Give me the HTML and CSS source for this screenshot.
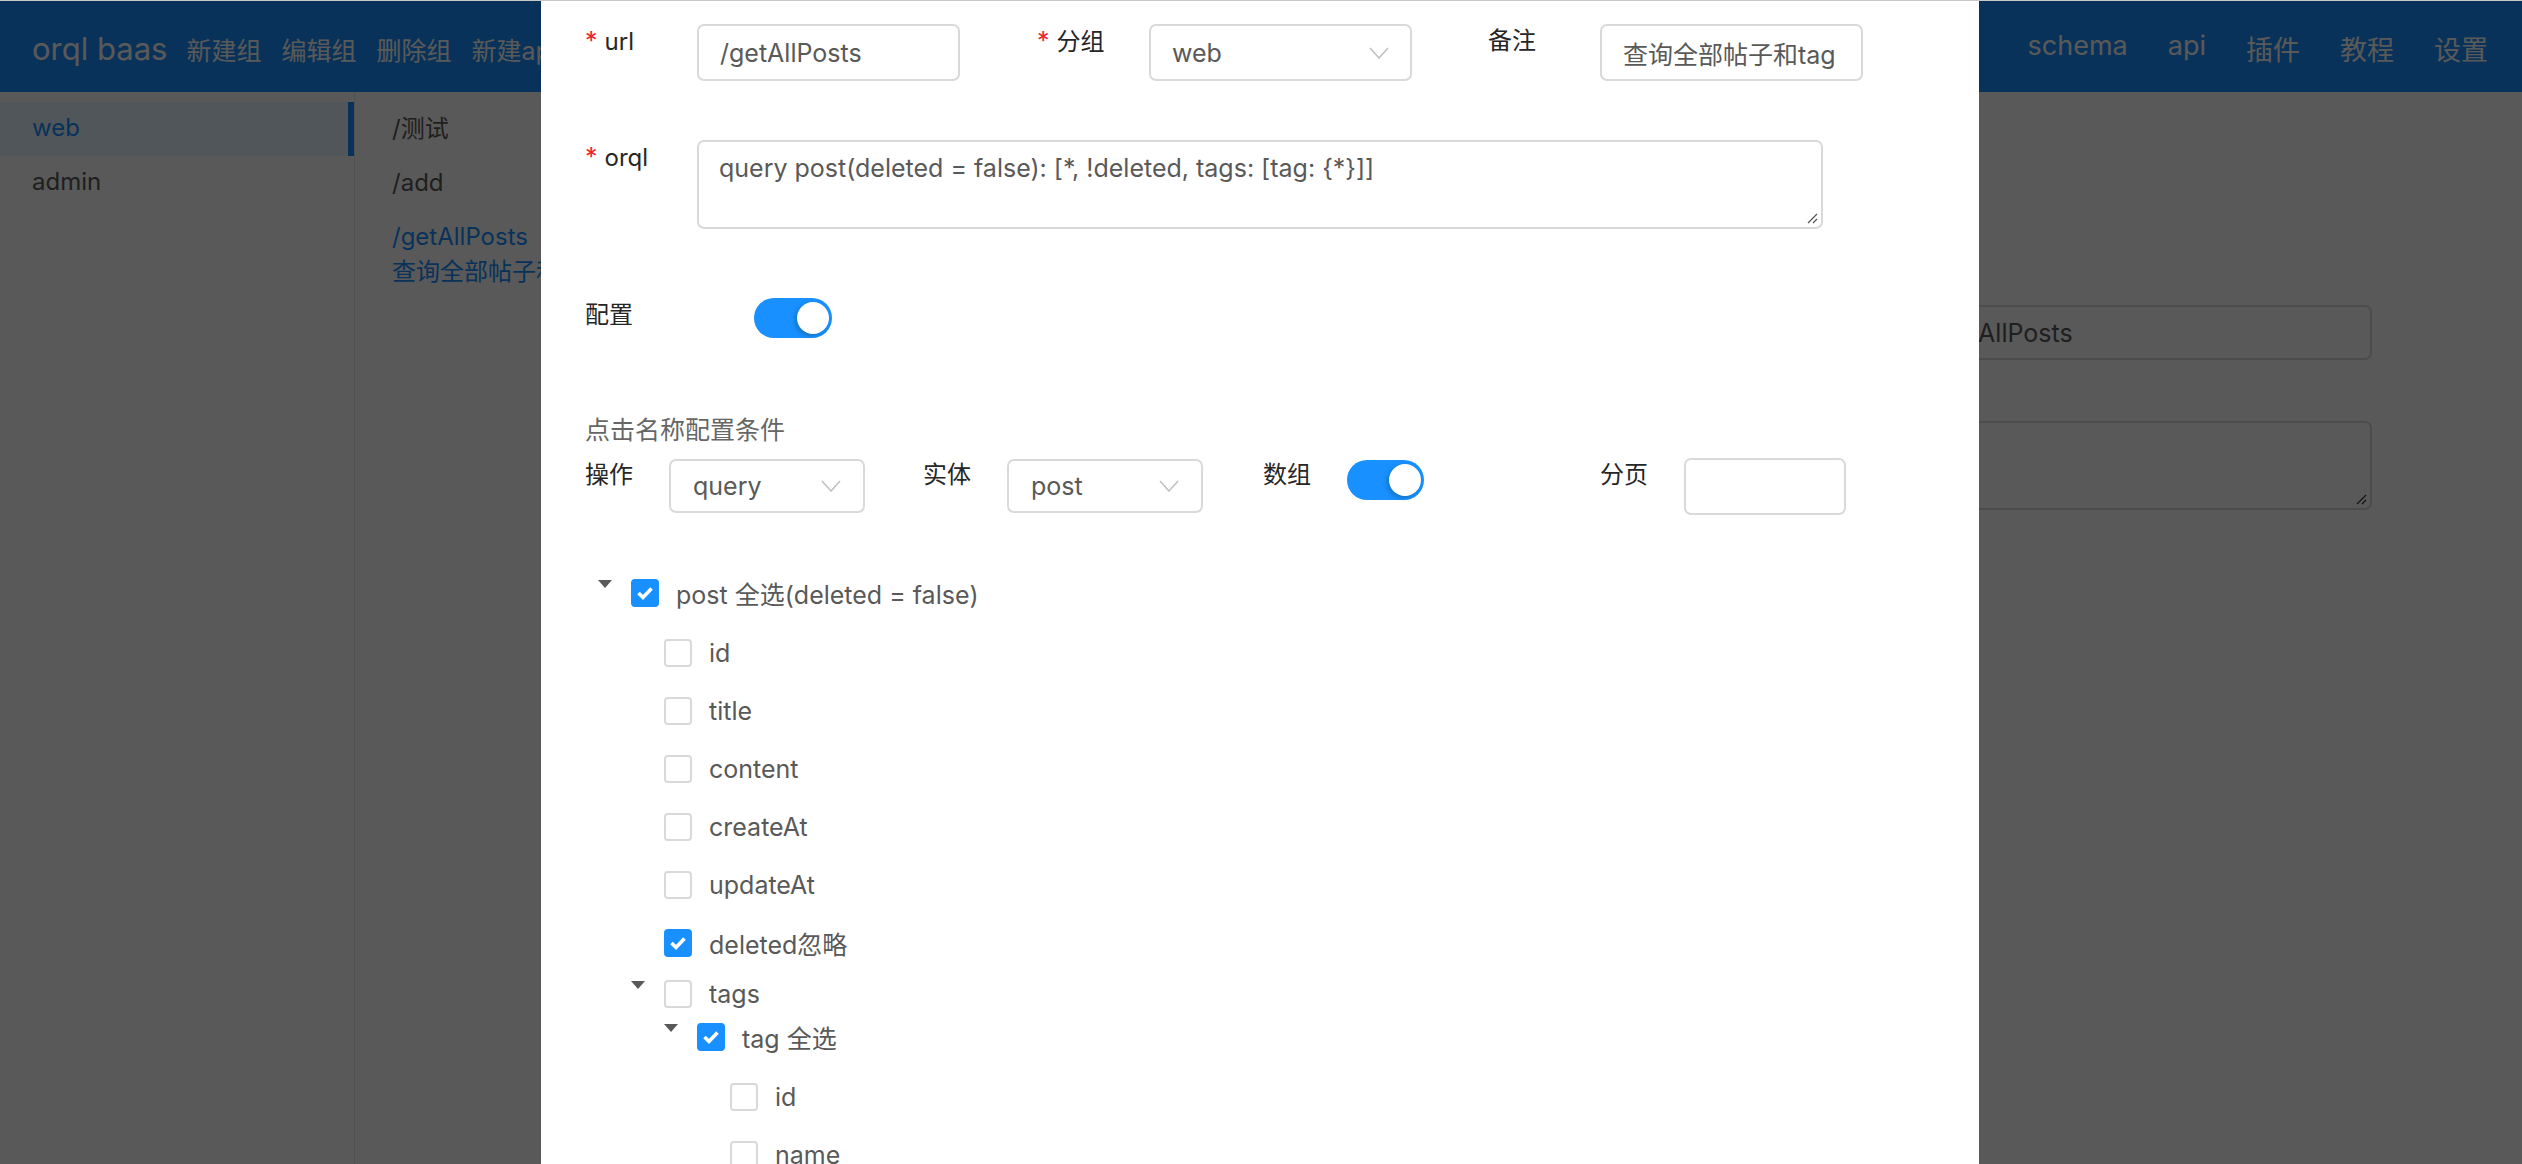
FILE: index.html
```html
<!DOCTYPE html>
<html lang="zh-CN">
<head>
<meta charset="utf-8">
<title>orql baas</title>
<link rel="stylesheet" href="styles.css">
</head>
<body>
<div class="app">
  <header class="topbar">
    <div class="brand">orql baas</div>
    <nav class="actions">
      <span>新建组</span><span>编辑组</span><span>删除组</span><span>新建api</span>
    </nav>
    <nav class="menu">
      <span>schema</span><span>api</span><span>插件</span><span>教程</span><span>设置</span>
    </nav>
  </header>
  <div class="body">
    <aside class="groups">
      <div class="group active">web</div>
      <div class="group">admin</div>
    </aside>
    <aside class="apis">
      <div class="api">/测试</div>
      <div class="api">/add</div>
      <div class="api active">/getAllPosts<br>查询全部帖子和tag</div>
    </aside>
    <main class="detail">
      <div class="field">
        <div class="field-input">/getAllPosts</div>
      </div>
      <div class="field field-gap">
        <div class="field-area">
          <svg class="grip" width="12" height="12" viewBox="0 0 12 12"><path d="M11 2 L2 11 M11 7 L7 11" stroke="#333" stroke-width="1.2" fill="none"/></svg>
        </div>
      </div>
    </main>
  </div>
</div>

<div class="mask"></div>

<div class="modal">
  <div class="form">
    <div class="row row-meta">
      <div class="item">
        <div class="lbl req">url</div>
        <div class="ctl input">/getAllPosts</div>
      </div>
      <div class="item">
        <div class="lbl req">分组</div>
        <div class="ctl select"><span>web</span><svg class="chev" width="20" height="12" viewBox="0 0 20 12"><polyline points="1,1 10,11 19,1" fill="none" stroke="#bfbfbf" stroke-width="1.5"/></svg></div>
      </div>
      <div class="item">
        <div class="lbl">备注</div>
        <div class="ctl input">查询全部帖子和tag</div>
      </div>
    </div>

    <div class="row row-orql">
      <div class="lbl req">orql</div>
      <div class="textarea">
        <span>query post(deleted = false): [*, !deleted, tags: [tag: {*}]]</span>
        <svg class="grip" width="12" height="12" viewBox="0 0 12 12"><path d="M11 2 L2 11 M11 7 L7 11" stroke="#555" stroke-width="1.2" fill="none"/></svg>
      </div>
    </div>

    <div class="row row-config">
      <div class="lbl lbl-wide">配置</div>
      <div class="switch"><span class="knob"></span></div>
    </div>

    <div class="hint">点击名称配置条件</div>

    <div class="row row-query">
      <div class="qitem">
        <div class="qlbl">操作</div>
        <div class="qctl select"><span>query</span><svg class="chev" width="20" height="12" viewBox="0 0 20 12"><polyline points="1,1 10,11 19,1" fill="none" stroke="#bfbfbf" stroke-width="1.5"/></svg></div>
      </div>
      <div class="qitem">
        <div class="qlbl">实体</div>
        <div class="qctl select"><span>post</span><svg class="chev" width="20" height="12" viewBox="0 0 20 12"><polyline points="1,1 10,11 19,1" fill="none" stroke="#bfbfbf" stroke-width="1.5"/></svg></div>
      </div>
      <div class="qitem">
        <div class="qlbl">数组</div>
        <div class="switch switch-q"><span class="knob"></span></div>
      </div>
      <div class="qitem">
        <div class="qlbl">分页</div>
        <div class="qctl page"></div>
      </div>
    </div>

    <div class="tree">
      <div class="node">
        <div class="trow nrow">
          <span class="slot"><span class="caret"></span></span>
          <span class="cb on"><svg width="28" height="28" viewBox="0 0 28 28"><polyline points="7.5,14 12,18.5 20.5,9.5" fill="none" stroke="#fff" stroke-width="3.6"/></svg></span>
          <span class="tl">post 全选(deleted = false)</span>
        </div>
        <div class="kids">
          <div class="leaves">
            <div class="trow lrow"><span class="slot"></span><span class="cb"></span><span class="tl">id</span></div>
            <div class="trow lrow"><span class="slot"></span><span class="cb"></span><span class="tl">title</span></div>
            <div class="trow lrow"><span class="slot"></span><span class="cb"></span><span class="tl">content</span></div>
            <div class="trow lrow"><span class="slot"></span><span class="cb"></span><span class="tl">createAt</span></div>
            <div class="trow lrow"><span class="slot"></span><span class="cb"></span><span class="tl">updateAt</span></div>
            <div class="trow lrow"><span class="slot"></span><span class="cb on"><svg width="28" height="28" viewBox="0 0 28 28"><polyline points="7.5,14 12,18.5 20.5,9.5" fill="none" stroke="#fff" stroke-width="3.6"/></svg></span><span class="tl">deleted忽略</span></div>
          </div>
          <div class="node">
            <div class="trow nrow">
              <span class="slot"><span class="caret"></span></span>
              <span class="cb"></span>
              <span class="tl">tags</span>
            </div>
            <div class="kids">
              <div class="node">
                <div class="trow nrow">
                  <span class="slot"><span class="caret"></span></span>
                  <span class="cb on"><svg width="28" height="28" viewBox="0 0 28 28"><polyline points="7.5,14 12,18.5 20.5,9.5" fill="none" stroke="#fff" stroke-width="3.6"/></svg></span>
                  <span class="tl">tag 全选</span>
                </div>
                <div class="kids">
                  <div class="leaves">
                    <div class="trow lrow"><span class="slot"></span><span class="cb"></span><span class="tl">id</span></div>
                    <div class="trow lrow"><span class="slot"></span><span class="cb"></span><span class="tl">name</span></div>
                  </div>
                </div>
              </div>
            </div>
          </div>
        </div>
      </div>
    </div>
  </div>
</div>
</body>
</html>
```

FILE: styles.css
```css
* { box-sizing: border-box; }

html, body {
  margin: 0;
  height: 100%;
}

body {
  border-top: 1px solid #c8c8c8;
  font-family: Inter, "Noto Sans CJK SC", sans-serif;
  color: #595959;
  background: #fff;
  overflow: hidden;
}

.app {
  height: calc(100vh - 1px);
  display: flex;
  flex-direction: column;
}

/* ---------- top bar ---------- */
.topbar {
  height: 91px;
  flex: none;
  background: #1890ff;
  color: #fff;
  display: flex;
  align-items: center;
  padding: 4px 34px 0 32px;
}

.brand {
  font-size: 31px;
  white-space: nowrap;
}

.actions {
  display: flex;
  gap: 20px;
  margin-left: 19px;
  font-size: 25px;
  white-space: nowrap;
}

.menu {
  margin-left: auto;
  display: flex;
  gap: 40px;
  font-size: 27px;
  white-space: nowrap;
}

/* ---------- body ---------- */
.body {
  flex: 1;
  display: flex;
}

.groups {
  width: 355px;
  flex: none;
  border-right: 1px solid #e8e8e8;
  padding-top: 10px;
}

.group {
  height: 54px;
  line-height: 52px;
  padding-left: 32px;
  font-size: 24px;
  color: #595959;
}

.group.active {
  background: #e6f7ff;
  color: #1890ff;
  border-right: 6px solid #1890ff;
}

.apis {
  width: 480px;
  flex: none;
  padding: 10px 0 0 37px;
  font-size: 24px;
  border-right: 1px solid #e8e8e8;
}

.api {
  line-height: 35px;
  padding: 9px 0 10px;
  color: #595959;
  white-space: nowrap;
}

.api.active {
  color: #1890ff;
}

.detail {
  flex: 1;
  padding: 213px 150px 0 0;
  font-size: 25px;
  display: flex;
  flex-direction: column;
  align-items: flex-end;
}

.field {
  display: flex;
  align-items: flex-start;
}

.field-gap {
  margin-top: 61px;
}

.field-input {
  width: 463px;
  height: 55px;
  border: 2px solid #d9d9d9;
  border-radius: 7px;
  padding: 0 20px;
  display: flex;
  align-items: center;
  color: #595959;
  white-space: nowrap;
}

.field-area {
  width: 463px;
  height: 89px;
  border: 2px solid #d9d9d9;
  border-radius: 7px;
  display: flex;
  align-items: flex-end;
  justify-content: flex-end;
  padding: 0 3px 3px 0;
}

/* ---------- mask + modal ---------- */
.mask {
  position: fixed;
  top: 1px;
  left: 0;
  right: 0;
  bottom: 0;
  background: rgba(0, 0, 0, 0.65);
}

.modal {
  position: fixed;
  top: 1px;
  left: 541px;
  width: 1438px;
  bottom: 0;
  background: #fff;
  overflow: hidden;
}

.form {
  padding: 23px 0 0 44px;
  font-size: 25px;
}

.row {
  display: flex;
  align-items: flex-start;
}

.row-meta {
  display: grid;
  grid-template-columns: 452px 451px 451px;
}

.item {
  display: flex;
  align-items: flex-start;
}

.lbl {
  width: 112px;
  flex: none;
  height: 34px;
  line-height: 34px;
  color: #262626;
  white-space: nowrap;
  font-size: 24px;
}

.lbl.req::before {
  content: "*";
  color: #f5222d;
  margin-right: 7px;
  font-size: 25px;
}

.lbl-wide {
  width: 169px;
}

.ctl {
  width: 263px;
  height: 57px;
  border: 2px solid #d9d9d9;
  border-radius: 7px;
  padding: 0 21px;
  display: flex;
  align-items: center;
  color: #595959;
  white-space: nowrap;
}

.select {
  justify-content: space-between;
}

.chev {
  flex: none;
}

.row-orql {
  margin-top: 59px;
}

.textarea {
  width: 1126px;
  height: 89px;
  border: 2px solid #d9d9d9;
  border-radius: 7px;
  padding: 8px 3px 3px 20px;
  line-height: 36px;
  color: #595959;
  display: flex;
  justify-content: space-between;
  align-items: flex-start;
}

.textarea .grip {
  align-self: flex-end;
}

.row-config {
  margin-top: 69px;
}

.switch {
  width: 78px;
  height: 40px;
  flex: none;
  border-radius: 20px;
  background: #1890ff;
  display: flex;
  align-items: center;
  justify-content: flex-end;
  padding-right: 3px;
}

.knob {
  width: 32px;
  height: 32px;
  border-radius: 50%;
  background: #fff;
  box-shadow: -2px 2px 4px rgba(0, 35, 11, 0.25);
}

.hint {
  margin-top: 75px;
  height: 34px;
  line-height: 34px;
  color: #666;
}

.row-query {
  margin-top: 11px;
  display: grid;
  grid-template-columns: 338px 340px 337px 338px;
}

.qitem {
  display: flex;
  align-items: flex-start;
}

.qlbl {
  width: 84px;
  flex: none;
  height: 34px;
  line-height: 34px;
  color: #262626;
  font-size: 24px;
}

.qctl {
  width: 196px;
  height: 54px;
  margin-top: 1px;
  border: 2px solid #d9d9d9;
  border-radius: 7px;
  padding: 0 22px;
  display: flex;
  align-items: center;
  color: #595959;
}

.qctl.page {
  width: 162px;
  height: 57px;
  margin-top: 0;
}

.switch-q {
  margin-top: 2px;
  width: 77px;
}

/* ---------- tree ---------- */
.tree {
  margin: 56px 0 0 13px;
}

.trow {
  display: flex;
  align-items: center;
}

.nrow {
  height: 43px;
}

.lrow {
  height: 58px;
}

.slot {
  width: 33px;
  flex: none;
  align-self: flex-start;
}

.caret {
  display: block;
  width: 0;
  height: 0;
  margin-top: 9px;
  border-left: 7px solid transparent;
  border-right: 7px solid transparent;
  border-top: 8px solid #595959;
}

.cb {
  width: 28px;
  height: 28px;
  flex: none;
  border: 2px solid #d9d9d9;
  border-radius: 4px;
  background: #fff;
  margin-right: 17px;
  display: flex;
  align-items: center;
  justify-content: center;
}

.cb.on {
  background: #1890ff;
  border-color: #1890ff;
}

.cb svg {
  flex: none;
}

.tl {
  color: #595959;
  white-space: nowrap;
}

.kids {
  padding-left: 33px;
}

.leaves {
  margin-top: 10px;
}
```
